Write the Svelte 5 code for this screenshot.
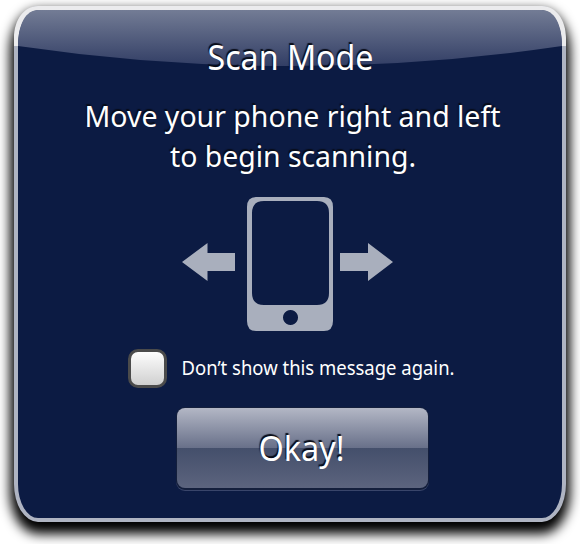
<script>
  let dismissed = $state(false);
</script>

<main>
  <section class="panel">
    <svg class="gloss" width="552" height="62" viewBox="0 0 552 62" aria-hidden="true">
      <defs>
        <linearGradient id="sheen" x1="0" y1="4" x2="0" y2="60" gradientUnits="userSpaceOnUse">
          <stop offset="0" stop-color="#737c95" />
          <stop offset="1" stop-color="#323e65" />
        </linearGradient>
      </defs>
      <path class="rim" d="M0 40V32C0 14 10 0 24 0H528C542 0 552 14 552 32V40H548C548 18 539 4 527 4H25C13 4 4 18 4 40Z" />
      <path fill="url(#sheen)" d="M4 40C4 18 12 4 24 4H528C540 4 548 18 548 40Q276 80 4 40Z" />
    </svg>
    <div class="content">
      <svg class="text raised" width="544" height="80">
        <text x="189.500" y="60" font-size="34" textLength="166" lengthAdjust="spacingAndGlyphs">Scan Mode</text>
      </svg>
      <svg class="text raised" width="544" height="106">
        <text x="66.500" y="37" font-size="29" textLength="416" lengthAdjust="spacingAndGlyphs">Move your phone right and left</text>
        <text x="152" y="77" font-size="29" textLength="246" lengthAdjust="spacingAndGlyphs">to begin scanning.</text>
      </svg>
      <svg class="scan" width="212" height="136" viewBox="0 0 212 136" aria-hidden="true">
        <path d="M0 66 25.500 47V57H53V75H25.500V85ZM211 66 186 47V57H158V75H186V85Z" />
        <path fill-rule="evenodd" d="M74 1H142Q151 1 151 11V125Q151 135 142 135H74Q65 135 65 125V11Q65 1 74 1ZM82 5Q70 5 70 17V97Q70 109 82 109H135Q147 109 147 97V17Q147 5 135 5ZM108.500 114a7.500 7.500 0 1 0 .01 0Z" />
      </svg>
      <label>
        <input type="checkbox" bind:checked={dismissed} />
        <svg class="text" width="280" height="39">
          <text x="14.500" y="26" font-size="19.500" textLength="273" lengthAdjust="spacingAndGlyphs">Don’t show this message again.</text>
        </svg>
      </label>
      <button type="button" onclick={() => (dismissed = true)}>
        <svg class="text raised" width="251" height="80">
          <text x="81.500" y="53" font-size="34.500" textLength="86" lengthAdjust="spacingAndGlyphs">Okay!</text>
        </svg>
      </button>
    </div>
  </section>
</main>

<style>
  :global(body) { margin: 0; background: #fff; overflow: hidden; }
  main { box-sizing: border-box; width: 580px; height: 544px; padding: 6px 14px; overflow: hidden; background: #fff; }
  .panel {
    position: relative;
    box-sizing: border-box;
    width: 552px;
    height: 516px;
    border: 4px solid #afb4c2;
    border-radius: 24px / 38px;
    background: #0c1b43;
    box-shadow: 0 8px 12px 4px #000;
  }
  .gloss { position: absolute; left: -4px; top: -4px; }
  .rim { fill: #ebebed; }
  .content { position: relative; display: flex; flex-direction: column; }
  svg { display: block; }
  .text { overflow: visible; fill: #fff; font-family: "Noto Sans", "Open Sans", sans-serif; }
  .raised { text-shadow: -1px -2px 1px #080c18; }
  .scan { margin-left: 164px; fill: #a9afbd; }
  label { display: flex; width: 340px; margin: 17px 0 0 110px; }
  input {
    appearance: none;
    box-sizing: border-box;
    width: 39px;
    height: 39px;
    margin: 0;
    border: 3px solid #4b4b4b;
    border-radius: 10px;
    background: linear-gradient(#fdfdfd, #d0d0d0);
  }
  button {
    width: 251px;
    height: 80px;
    margin: 20px 0 0 159px;
    padding: 0;
    border: 0;
    border-radius: 8px;
    background: linear-gradient(#b3b7c5 0, #687089 40px, #444f6b 40px, #5c647e 80px);
    box-shadow: 0 0 0 1px #141f3c, 0 1px 0 1px #141f3c, 0 2px 0 1px #39456a;
  }
</style>
